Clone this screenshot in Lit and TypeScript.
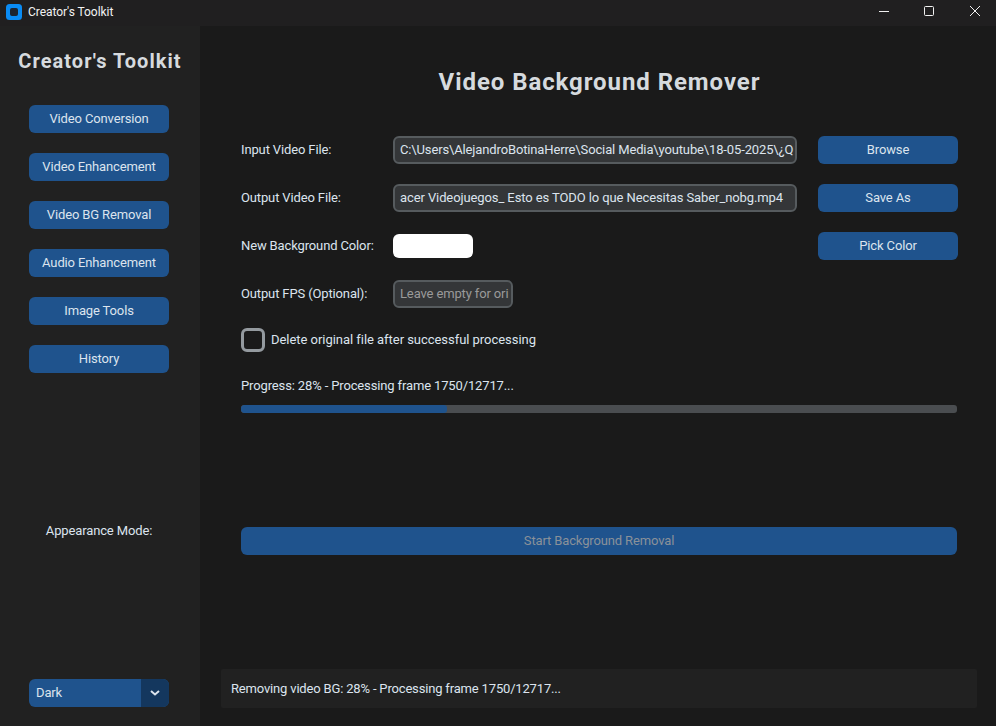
import { LitElement, html, css } from "lit";
import { customElement } from "lit/decorators.js";

@customElement("app-root")
export class AppRoot extends LitElement {
  static styles = css`
    :host {
      display: flex;
      flex-direction: column;
      width: 996px;
      height: 726px;
      overflow: hidden;
      background: #1a1a1a;
      color: #dce4ee;
      font-family: Roboto, "Liberation Sans", sans-serif;
      font-size: 13px;
      line-height: 16px;
      letter-spacing: -0.135px;
    }
    .titlebar {
      flex: none;
      height: 26px;
      box-sizing: border-box;
      padding-bottom: 2px;
      display: flex;
      align-items: center;
      background: #201f20;
      color: #f2f2f2;
      font-size: 12px;
      letter-spacing: -0.05px;
    }
    .app-icon { margin: 0 6px 0 6px; display: block; }
    .controls { margin-left: auto; margin-right: -2px; display: flex; align-self: flex-start; }
    .ctl { width: 46px; height: 22px; display: flex; align-items: center; justify-content: center; }
    .ctl.min { width: 45px; }
    .body { flex: 1; display: flex; min-height: 0; }
    .sidebar {
      flex: none;
      width: 200px;
      box-sizing: border-box;
      padding: 22px 2px 0 0;
      background: #212121;
      display: flex;
      flex-direction: column;
      align-items: center;
    }
    .brand {
      font-size: 20px;
      line-height: 26px;
      font-weight: 700;
      margin: 0 0 31px 2px;
      white-space: nowrap;
      letter-spacing: 1.05px;
      color: #d6dade;
    }
    .nav { display: flex; flex-direction: column; gap: 20px; }
    .btn {
      height: 28px;
      width: 140px;
      border-radius: 6px;
      background: #1f538d;
      display: flex;
      align-items: center;
      justify-content: center;
      white-space: nowrap;
    }
    .appearance { margin-top: 150px; line-height: 16px; }
    .dropdown {
      margin-top: auto;
      margin-bottom: 19px;
      width: 140px;
      height: 28px;
      border-radius: 6px;
      overflow: hidden;
      display: flex;
      background: #1f538d;
    }
    .dd-label { flex: 1; padding-left: 7px; line-height: 28px; }
    .dd-arrow { width: 28px; background: #14375e; display: flex; align-items: center; justify-content: center; }
    .main { flex: 1; min-width: 0; display: flex; flex-direction: column; }
    .heading {
      font-size: 24px;
      line-height: 30px;
      font-weight: 700;
      text-align: center;
      margin: 41px 0 39px;
      padding-left: 3px;
      letter-spacing: 0.93px;
      color: #d6dade;
    }
    .form {
      margin: 0 38px 0 41px;
      display: grid;
      grid-template-columns: 152px 404px 161px;
      row-gap: 20px;
      align-items: center;
    }
    .form .btn { justify-self: end; grid-column: 3; }
    .entry {
      box-sizing: border-box;
      height: 28px;
      border: 2px solid #565b5e;
      border-radius: 6px;
      background: #343638;
      padding: 0 5px;
      line-height: 24px;
      overflow: hidden;
      white-space: nowrap;
    }
    .entry.output { letter-spacing: -0.1px; }
    .entry.fps { width: 120px; color: #9a9a9a; }
    .swatch { width: 80px; height: 24px; border-radius: 6px; background: #fff; }
    .check-row { margin: 20px 0 0 41px; display: flex; align-items: center; gap: 6px; height: 24px; letter-spacing: -0.04px; }
    .check { box-sizing: border-box; width: 24px; height: 24px; border: 3px solid #949a9f; border-radius: 6px; }
    .progress-label { margin: 26px 0 0 41px; }
    .bar { margin: 11px 39px 0 41px; height: 8px; border-radius: 3px; background: #4a4d50; overflow: hidden; }
    .fill { height: 100%; background: #1f538d; border-radius: 3px; }
    .start { margin: 114px 39px 0 41px; width: auto; color: #8a9199; }
    .status {
      margin: auto 19px 18px 21px;
      height: 39px;
      box-sizing: border-box;
      padding-left: 10px;
      background: #212121;
      border-radius: 2px;
      display: flex;
      align-items: center;
      letter-spacing: -0.17px;
    }
  `;

  render() {
    const nav = ["Video Conversion", "Video Enhancement", "Video BG Removal", "Audio Enhancement", "Image Tools", "History"];
    const progress = 28.8;
    return html`
      <div class="titlebar">
        <svg class="app-icon" width="16" height="16" viewBox="0 0 16 16">
          <rect width="16" height="16" rx="3.5" fill="#0a8cf5"></rect>
          <rect x="4" y="4" width="8" height="8" rx="2" fill="#1c2430"></rect>
        </svg>
        <span>Creator's Toolkit</span>
        <div class="controls">
          <div class="ctl min">
            <svg width="10" height="10" viewBox="0 0 10 10"><path d="M0 5.5H10" stroke="#f0f0f0" stroke-width="1"></path></svg>
          </div>
          <div class="ctl">
            <svg width="10" height="10" viewBox="0 0 10 10"><rect x=".5" y=".5" width="9" height="9" rx="1" fill="none" stroke="#f0f0f0"></rect></svg>
          </div>
          <div class="ctl">
            <svg width="10" height="10" viewBox="0 0 10 10"><path d="M0 0L10 10M10 0L0 10" stroke="#f0f0f0" stroke-width="1"></path></svg>
          </div>
        </div>
      </div>
      <div class="body">
        <aside class="sidebar">
          <div class="brand">Creator's Toolkit</div>
          <nav class="nav">
            ${nav.map((n) => html`<div class="btn">${n}</div>`)}
          </nav>
          <div class="appearance">Appearance Mode:</div>
          <div class="dropdown">
            <div class="dd-label">Dark</div>
            <div class="dd-arrow">
              <svg width="10" height="6" viewBox="0 0 10 6"><path d="M1 1L5 4.5L9 1" fill="none" stroke="#dce4ee" stroke-width="2"></path></svg>
            </div>
          </div>
        </aside>
        <main class="main">
          <div class="heading">Video Background Remover</div>
          <div class="form">
            <div>Input Video File:</div>
            <div class="entry">C:\\Users\\AlejandroBotinaHerre\\Social Media\\youtube\\18-05-2025\\¿Q</div>
            <div class="btn">Browse</div>
            <div>Output Video File:</div>
            <div class="entry output">acer Videojuegos_ Esto es TODO lo que Necesitas Saber_nobg.mp4</div>
            <div class="btn">Save As</div>
            <div>New Background Color:</div>
            <div class="swatch"></div>
            <div class="btn">Pick Color</div>
            <div>Output FPS (Optional):</div>
            <div class="entry fps">Leave empty for ori</div>
          </div>
          <div class="check-row">
            <div class="check"></div>
            <span>Delete original file after successful processing</span>
          </div>
          <div class="progress-label">Progress: 28% - Processing frame 1750/12717...</div>
          <div class="bar"><div class="fill" style="width:${progress}%"></div></div>
          <div class="btn start">Start Background Removal</div>
          <div class="status">Removing video BG: 28% - Processing frame 1750/12717...</div>
        </main>
      </div>
    `;
  }
}
